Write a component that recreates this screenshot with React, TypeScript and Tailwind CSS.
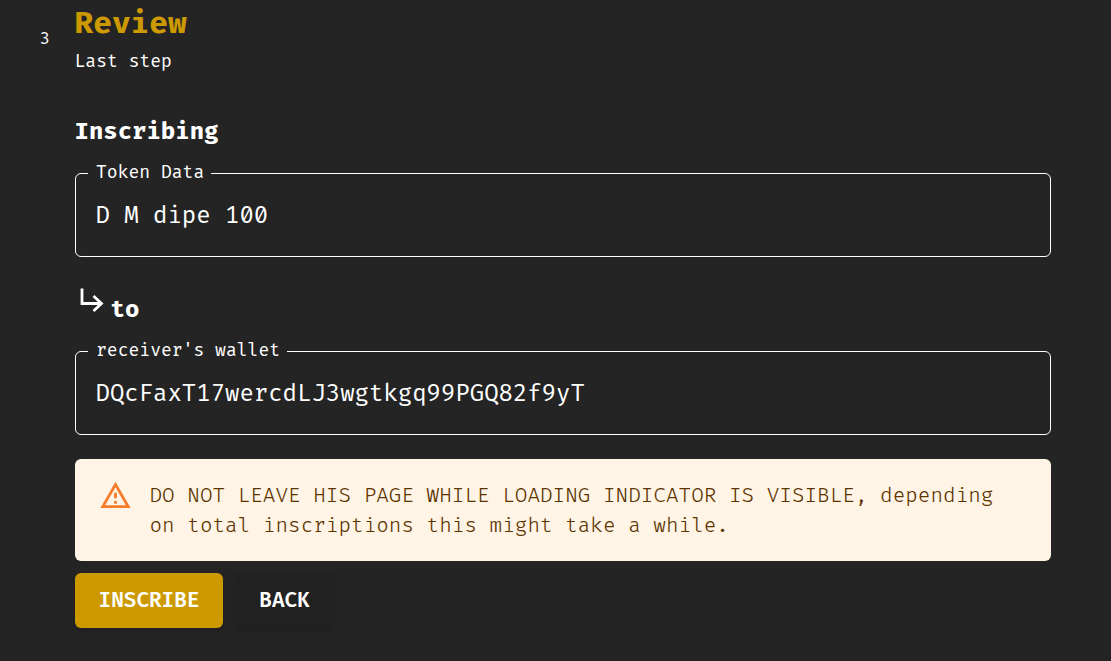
export default function App() {
  return (
    <div className="min-h-[661px] bg-[#242424] text-white font-['Fira_Code','Fira_Mono','DejaVu_Sans_Mono','Liberation_Mono',monospace]">
      <div className="flex">
        <div className="w-[75px] pt-[29px] pl-[40px] text-[16px] leading-[20px]">3</div>
        <div className="w-[976px]">
          <h1 className="text-[30.4px] leading-[32px] pt-[8px] font-bold text-[#cc9900] ml-[-0.5px]">Review</h1>
          <p className="text-[17.6px] leading-[24px] mt-[10px] ml-[-0.5px]">Last step</p>
          <h2 className="text-[23.4px] leading-[28px] font-bold mt-[44px] ml-[-0.5px]">Inscribing</h2>
          <fieldset className="border border-white rounded-[6px] h-[94px] mt-[17px] px-[12px]">
            <legend className="pl-[8px] pr-[7px] text-[17.6px] leading-[20px]">Token Data</legend>
            <div className="text-[23.4px] pl-[7.5px] pt-[17px] leading-[32px]">D M dipe 100</div>
          </fieldset>
          <div className="flex items-end h-[40px] mt-[27px]">
            <svg width="36" height="40" viewBox="0 0 36 40" fill="none" stroke="white" strokeWidth="2.8">
              <path d="M7 4.5v15h20M18.5 12l8 7.5-8 7.5" />
            </svg>
            <span className="text-[23.4px] font-bold leading-[28px] ml-[-0.5px]">to</span>
          </div>
          <fieldset className="border border-white rounded-[6px] h-[94px] mt-[17px] px-[12px]">
            <legend className="pl-[8px] pr-[6.5px] text-[17.6px] leading-[20px]">receiver's wallet</legend>
            <div className="text-[23.4px] pl-[7.5px] pt-[17px] leading-[32px]">DQcFaxT17wercdLJ3wgtkgq99PGQ82f9yT</div>
          </fieldset>
          <div className="flex bg-[#fff4e5] rounded-[6px] h-[102px] mt-[24px] text-[#5c3400] pl-[24px] pr-[24px] py-[21px] gap-[17.5px]">
            <svg className="shrink-0 mt-[-1px]" width="33" height="33" viewBox="0 0 24 24" fill="#f67c2a">
              <path d="M12 5.99 19.53 19H4.47L12 5.99M12 2 1 21h22L12 2zm1 14h-2v2h2v-2zm0-6h-2v4h2v-4z" />
            </svg>
            <p className="text-[20.48px] leading-[30px] font-light mt-[1px]">DO NOT LEAVE HIS PAGE WHILE LOADING INDICATOR IS VISIBLE, depending on total inscriptions this might take a while.</p>
          </div>
          <div className="flex gap-[12px] mt-[12px]">
            <button className="h-[55px] w-[148px] rounded-[6px] bg-[#cc9900] font-semibold text-[20.48px] pt-[2px] shadow-md">INSCRIBE</button>
            <button className="h-[55px] w-[99px] rounded-[6px] bg-[#212121] font-semibold text-[20.48px] pt-[2px] shadow-md">BACK</button>
          </div>
        </div>
      </div>
    </div>
  );
}
